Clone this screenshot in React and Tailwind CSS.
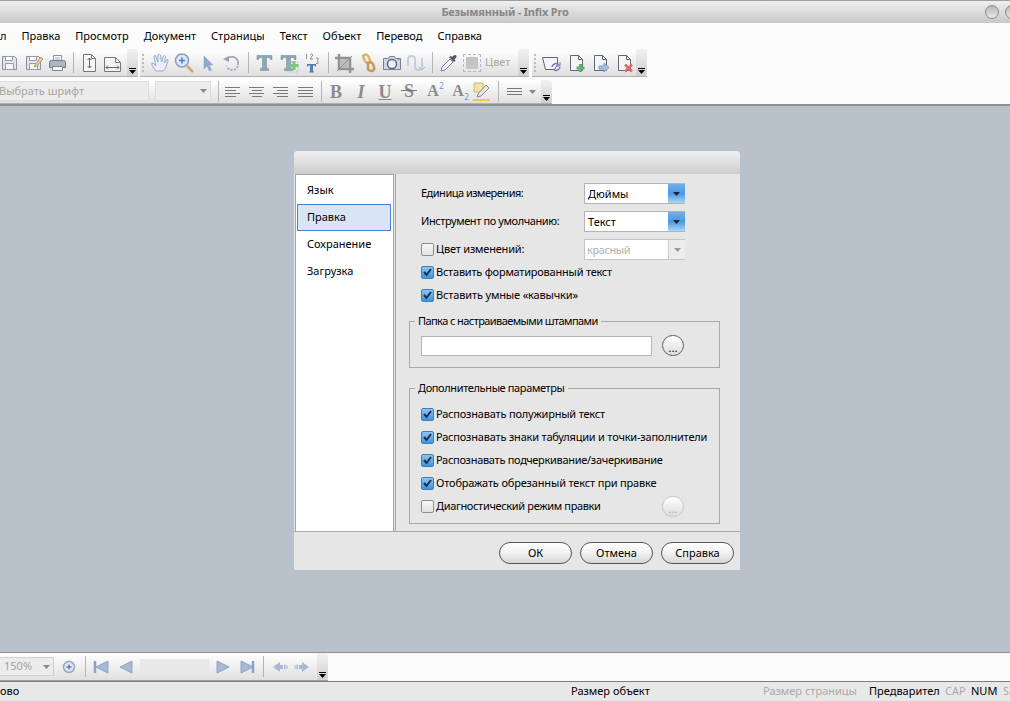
const font = { fontFamily: '"Noto Sans", "Open Sans", sans-serif' };

function Ic({ children, w = 24 }) {
  return (
    <svg width={w} height="24" viewBox={`0 0 ${w} 24`} fill="none" className="block shrink-0">
      {children}
    </svg>
  );
}

function Cell({ w = "w-6", children }) {
  return <div className={`${w} h-full flex items-center justify-center shrink-0`}>{children}</div>;
}

function Sep() {
  return <div className="w-[8px] h-full shrink-0 flex items-center justify-center"><div className="w-px h-[21px] bg-[#b4b4b4]" /></div>;
}

function Grip() {
  return (
    <div className="w-[5px] h-full shrink-0 flex flex-col items-center justify-center gap-[2px]">
      {[0, 1, 2, 3, 4].map((i) => <div key={i} className="w-[2px] h-[2px] bg-[#bdbdbd]" />)}
    </div>
  );
}

function More() {
  return (
    <div className="w-[11px] h-full shrink-0 bg-gradient-to-b from-[#f2f2f2] to-[#cfcfcf] rounded-r-[3px] flex flex-col items-center justify-end pb-[2px]">
      <div className="w-[7px] h-px bg-black mb-[1px]" />
      <svg width="7" height="4" viewBox="0 0 7 4" className="block"><path d="M0 0h7L3.5 4z" fill="#000" /></svg>
    </div>
  );
}

const Save = ({ pen }) => (
  <Ic>
    <path d="M5.5 5.5h12l2 2v11h-14z" fill="#dfe3ec" stroke="#8a8f9c" />
    <path d="M8.5 5.5h7v4h-7z" fill="#fff" stroke="#9a9ea9" />
    <path d="M8.5 12.5h8v6h-8z" fill="#f4f4f4" stroke="#9a9ea9" />
    {pen && <path d="M14 14l6-8 2 2-6 7-3 1z" fill="#e8d49a" stroke="#b39c62" />}
  </Ic>
);
const Print = () => (
  <Ic>
    <path d="M8.5 4.5h8v6h-8z" fill="#fff" stroke="#8c93a0" />
    <path d="M10 7h5M10 9h5" stroke="#7fb0c9" />
    <path d="M4.5 11.5q0-2 2-2h12q2 0 2 2v5h-16z" fill="#aeb6c4" stroke="#727a88" />
    <path d="M7.5 15.5h10v4h-10z" fill="#f4f5f7" stroke="#7d8491" />
  </Ic>
);
const PageV = () => (
  <Ic>
    <path d="M6.5 3.5h8l4 4v13h-12z" fill="#f5f5f5" stroke="#777" />
    <path d="M14.5 3.5v4h4" stroke="#777" />
    <path d="M12.5 7v10M10.5 9l2-2 2 2M10.5 15l2 2 2-2" stroke="#666" />
  </Ic>
);
const PageH = () => (
  <Ic>
    <path d="M3.5 6.500h11l5 5v9h-16z" fill="#f5f5f5" stroke="#777" />
    <path d="M14.500 6.500v5h5" stroke="#777" />
    <path d="M5 16.500h13M7 14.500l-2 2 2 2M16 14.500l2 2-2 2" stroke="#666" />
  </Ic>
);
const Hand = () => (
  <Ic>
    <path d="M8 20q-2-2-4-6-1-2 1-2l3 3-2-9q0-2 1.500-1.500L10 11 10 4q1.500-1.500 2.500 0L13.500 11l2-6q1.500-1 2 .5L16.500 12l2.500-3.500q1.500 0 1 1.500L18 16q-1 3-3 4z" fill="#e9eefa" stroke="#9aa9cc" />
  </Ic>
);
const Zoom = () => (
  <Ic>
    <circle cx="10" cy="9.500" r="6.500" fill="#dbe6f6" stroke="#8d9cbe" strokeWidth="1.500" />
    <path d="M7 9.500h6M10 6.500v6" stroke="#5a78ba" strokeWidth="1.500" />
    <path d="M15 15l6 6" stroke="#c9ab6c" strokeWidth="2.500" />
  </Ic>
);
const Arrow = () => (
  <Ic><path d="M8 5l0 13 3-3 2.500 5 2-1-2.500-5H17z" fill="#8fa9cf" stroke="#86a0c6" strokeWidth="0.5" /></Ic>
);
const Rot = () => (
  <Ic>
    <path d="M7 8q3-3 7-2 5 2 4 8" stroke="#98a0b2" strokeWidth="1.500" />
    <path d="M18 15q-2 4-6 4-4 0-5-4" stroke="#8f9dc8" strokeWidth="1.500" strokeDasharray="2 1.500" />
    <path d="M3 8l6-3v6z" fill="#98a0b2" />
  </Ic>
);
const BigT = ({ plus, nums }) => (
  <Ic>
    <path d={nums ? "M7 13h9v2.500h-1l-.5-1h-1.500v6h1v1h-5v-1h1v-6h-1.500l-.5 1h-1z" : "M5 4.500h15v4h-1.500l-1-2h-3v11h2v2h-8v-2h2v-11h-3l-1 2H5z"} fill={nums ? "#4f7fb4" : "#8ca6b4"} stroke={nums ? "none" : "#6c8594"} strokeWidth="0.5" />
    {plus && <path d="M12 11h10v10H12z" fill="none" stroke="#a8b8d8" strokeDasharray="1.500 1.500" />}
    {plus && <path d="M18 10v9M13.500 14.500h9" stroke="#7cc77c" strokeWidth="3" />}
    {nums && <path d="M6.500 3v5M10 4q2-2 3 0l-3 4h3M16 7h2q1 1.500-1 2.500q2 .5 1 3h-2" stroke="#777" strokeWidth="0.8" />}
  </Ic>
);
const Crop = () => (
  <Ic>
    <path d="M7 3v15h15M3 7h15v15" stroke="#939393" strokeWidth="2.500" />
    <path d="M8 8h9v9H8z" fill="#bcbcbc" />
    <path d="M5 20L20 5" stroke="#939393" />
  </Ic>
);
const Link = () => (
  <Ic>
    <path d="M7 5q3-3 5 0l2 4q1 3-2 3-2 0-3-2z" stroke="#d8b56a" strokeWidth="2.500" />
    <path d="M12 12q3-2 5 1l1 3q1 3-2 4-3 0-4-2z" stroke="#c89c4e" strokeWidth="2.500" />
  </Ic>
);
const Cam = () => (
  <Ic>
    <path d="M3.500 7.500h5l1-2h5l1 2h5v11h-17z" fill="#cdd6e6" stroke="#74809a" />
    <circle cx="12" cy="13" r="4.500" fill="#eef1f6" stroke="#5e6a82" strokeWidth="1.500" />
    <path d="M17 8h3" stroke="#d06060" />
  </Ic>
);
const Curve = () => (
  <Ic>
    <path d="M4 15V9q0-4 3.500-4T11 9v7q0 3 3.500 3T18 16V7" stroke="#c2cee3" strokeWidth="2" />
    <path d="M15 16l3 3 3-3" stroke="#a8b8d4" fill="none" />
  </Ic>
);
const Dropper = () => (
  <Ic>
    <path d="M5 20l1-4 8-8 3 3-8 8z" fill="#eef3fb" stroke="#6f80b8" />
    <path d="M13 6l5 5 1.500-1.500-1-1 2-2.500q.5-2-2-2l-2.500 2-1-1z" fill="#555" />
  </Ic>
);
const Swatch = () => (
  <div className="w-[18px] h-[18px] border border-dashed border-[#a9b9dc] p-[2px]">
    <div className="w-full h-full bg-[#c4c4c4]" />
  </div>
);
const Doc = ({ badge }) => (
  <Ic>
    <path d="M6.500 4.500h8l4 4v11h-12z" fill="#f3f5f8" stroke="#5f6670" />
    <path d="M14.500 4.500v4h4" stroke="#5f6670" />
    {badge === "add" && <path d="M16.500 13v8M12.500 17h8" stroke="#5fb36a" strokeWidth="3" />}
    {badge === "go" && <path d="M11 15h5v-3l5 4.500-5 4.500v-3h-5z" fill="#a7c0e6" stroke="#7f9bc8" />}
    {badge === "del" && <path d="M13 13.500l7 7M20 13.500l-7 7" stroke="#e06a6a" strokeWidth="2.500" />}
  </Ic>
);
const DocRefresh = () => (
  <Ic>
    <path d="M2.500 6.500h15v7l-3 5h-9z" fill="#f3f5f8" stroke="#5f6670" />
    <path d="M12 16a4 4 0 0 1 7-2M20 16a4 4 0 0 1-7 2" stroke="#7b74c4" strokeWidth="1.500" />
    <path d="M20 11v4h-4" stroke="#7b74c4" />
  </Ic>
);
const Align = ({ lines }) => (
  <Ic>
    {lines.map(([x1, x2], i) => <path key={i} d={`M${x1} ${7.5 + i * 3}H${x2}`} stroke="#777" />)}
  </Ic>
);
const Letter = ({ children, cls, small }) => (
  <span className={`${small ? "text-[16px]" : "text-[18px]"} leading-none text-[#8a8a8a] font-bold ${cls || ""}`} style={{ fontFamily: '"Liberation Serif", serif' }}>{children}</span>
);
const Marker = () => (
  <Ic>
    <path d="M4 3h9v9H4z" fill="#f0e4a8" stroke="#c8b878" />
    <path d="M8 14l8-9 3 3-8 8-4 1z" fill="#e8e8e8" stroke="#888" />
    <path d="M3 20h17" stroke="#f0c850" strokeWidth="2" />
  </Ic>
);
const Lines = () => (
  <Ic>
    <path d="M3 8.500h15M3 11.500h15M3 14.500h15" stroke="#777" />
  </Ic>
);

const Caret = ({ c = "#888" }) => (
  <svg width="7" height="4" viewBox="0 0 7 4" className="block"><path d="M0 0h7L3.500 4z" fill={c} /></svg>
);

function NavTri({ dir, bar }) {
  return (
    <Ic>
      {dir === "left" ? <path d="M19 6v12L7 12z" fill="#a7b9d4" stroke="#8ea3c4" /> : <path d="M6 6v12l12-6z" fill="#a7b9d4" stroke="#8ea3c4" />}
      {bar && <path d={dir === "left" ? "M6 6v12" : "M18 6v12"} stroke="#8ea3c4" strokeWidth="2.500" />}
    </Ic>
  );
}

function NavHist({ dir }) {
  return (
    <Ic>
      {dir === "left"
        ? <path d="M5 12l7-5v3h3v4h-3v3zM16 9.500h1.500v5H16zM18.500 10h1v4h-1z" fill="#a7b9d4" />
        : <path d="M19 12l-7-5v3H9v4h3v3zM6.500 9.500H8v5H6.500zM4.500 10h1v4h-1z" fill="#a7b9d4" />}
    </Ic>
  );
}

function Check({ on }) {
  return (
    <div className={`w-[13px] h-[13px] rounded-[2px] border shrink-0 flex items-center justify-center ${on ? "border-[#3f7fb8] bg-gradient-to-b from-[#8cc6f2] to-[#3b95df]" : "border-[#8e8e8e] bg-gradient-to-b from-[#f8f8f8] to-[#e2e2e2]"}`}>
      {on && (
        <svg width="11" height="11" viewBox="0 0 11 11" className="block">
          <path d="M2 5l2.500 3L9 2" stroke="#12324f" strokeWidth="2" fill="none" />
        </svg>
      )}
    </div>
  );
}

function CheckRow({ on, label, cls }) {
  return (
    <div className="h-[23px] flex items-center gap-[2px] ml-[12px]">
      <Check on={on} />
      <span className={`whitespace-nowrap ${cls}`}>{label}</span>
    </div>
  );
}

function Combo({ label, disabled }) {
  return (
    <div className={`w-[101px] h-[21px] flex border bg-white ${disabled ? "border-[#c4c4c4] border-r-0" : "border-[#b4b4b4] border-r-0"}`}>
      <span className={`flex-1 leading-[19px] ${disabled ? "text-[#b0b0b0] tracking-[-0.4px] pl-[2px]" : "pl-[3px]"}`}>{label}</span>
      {disabled ? (
        <div className="w-[17px] bg-[#ececec] border-l border-[#cfcfcf] flex items-center justify-center"><Caret c="#9a9a9a" /></div>
      ) : (
        <div className="w-[17px] bg-gradient-to-b from-[#6fb0ea] via-[#4c97e0] to-[#a9d6f7] flex items-center justify-center"><Caret c="#0d2a45" /></div>
      )}
    </div>
  );
}

function ComboRow({ label, value, disabled, check, cls }) {
  return (
    <div className="h-[21px] flex items-center ml-[12px]">
      <div className="w-[163px] flex items-center gap-[2px] whitespace-nowrap shrink-0">
        {check && <Check />}
        <span className={cls}>{label}</span>
      </div>
      <Combo label={value} disabled={disabled} />
    </div>
  );
}

function RoundBtn({ disabled }) {
  return (
    <div className={`w-[22px] h-[21px] rounded-full border flex items-end justify-center bg-gradient-to-b from-white to-[#dcdcdc] ${disabled ? "border-[#c6c6c6] text-[#b0b0b0]" : "border-[#5e5e5e]"}`}>
      <span className="leading-[15px]">...</span>
    </div>
  );
}

function PillBtn({ children }) {
  return (
    <div className="w-[73px] h-[22px] rounded-full border border-[#565656] bg-gradient-to-b from-white via-[#f1f1f1] to-[#d6d6d6] flex items-center justify-center">
      {children}
    </div>
  );
}

const menu = ["Правка", "Просмотр", "Документ", "Страницы", "Текст", "Объект", "Перевод", "Справка"];
const sideItems = ["Язык", "Правка", "Сохранение", "Загрузка"];

export default function App() {
  return (
    <div className="w-[1010px] h-[701px] overflow-hidden flex flex-col bg-[#b9c2ca] text-[11px] text-black" style={font}>
      {/* title bar */}
      <div className="h-[23px] shrink-0 border-t border-[#a0a0a0] bg-gradient-to-b from-[#f0f0f0] to-[#c8c8c8] relative flex items-center justify-center">
        <span className="font-bold text-[#868686] tracking-[-0.2px]">Безымянный - Infix Pro</span>
        <div className="absolute left-[985px] top-[4px] w-[14px] h-[14px] rounded-full border border-[#8a8a8a] bg-gradient-to-b from-[#b8b8b8] to-[#e8e8e8]" />
        <div className="absolute left-[1005px] top-[4px] w-[14px] h-[14px] rounded-full border border-[#8a8a8a] bg-gradient-to-b from-[#b8b8b8] to-[#e8e8e8]" />
      </div>

      {/* menu */}
      <div className="h-[26px] shrink-0 bg-[#fbfbfb] flex items-center whitespace-nowrap">
        <span className="mr-[15px]">л</span>
        {menu.map((m) => (
          <span key={m} className="mr-[15px]">{m}</span>
        ))}
      </div>

      {/* toolbar row 1 */}
      <div className="h-[28px] shrink-0 bg-[#fbfbfb] flex -ml-[3px]">
        <div className="flex h-full bg-gradient-to-b from-white to-[#dfdfdf] border-b border-[#b0b0b0] shrink-0">
          <Cell><Save /></Cell>
          <Cell><Save pen /></Cell>
          <Cell><Print /></Cell>
          <Sep />
          <Cell><PageV /></Cell>
          <Cell><PageH /></Cell>
          <div className="w-[2px]" />
          <More />
        </div>
        <div className="w-[2px] shrink-0" />
        <div className="flex h-full bg-gradient-to-b from-white to-[#dfdfdf] border-b border-[#b0b0b0] shrink-0">
          <Grip />
          <div className="w-[3px]" />
          <Cell><Hand /></Cell>
          <Cell><Zoom /></Cell>
          <Cell><Arrow /></Cell>
          <Cell><Rot /></Cell>
          <Sep />
          <Cell><BigT /></Cell>
          <Cell><BigT plus /></Cell>
          <Cell><BigT nums /></Cell>
          <Sep />
          <Cell><Crop /></Cell>
          <Cell><Link /></Cell>
          <Cell><Cam /></Cell>
          <Cell><Curve /></Cell>
          <Sep />
          <Cell><Dropper /></Cell>
          <Cell><Swatch /></Cell>
          <div className="w-[34px] h-full flex items-center text-[#a8a8a8] pl-[1px]">Цвет</div>
          <More />
        </div>
        <div className="w-[3px] shrink-0" />
        <div className="flex h-full bg-gradient-to-b from-white to-[#dfdfdf] border-b border-[#b0b0b0] shrink-0">
          <Grip />
          <div className="w-[3px]" />
          <Cell><DocRefresh /></Cell>
          <Cell><Doc badge="add" /></Cell>
          <Cell><Doc badge="go" /></Cell>
          <Cell><Doc badge="del" /></Cell>
          <More />
        </div>
      </div>

      {/* gap */}
      <div className="h-[3px] shrink-0 bg-[#fbfbfb]" />

      {/* toolbar row 2 */}
      <div className="h-[24px] shrink-0 bg-[#fbfbfb]">
        <div className="flex h-full w-fit bg-gradient-to-b from-white to-[#e0e0e0] border-b border-[#b0b0b0]">
          <div className="w-[150px] h-[20px] mt-[1px] bg-[#ececec] border border-[#dcdcdc] -ml-[1px] overflow-hidden whitespace-nowrap text-[#a4a4a4] leading-[18px] shrink-0">
            <span className="-ml-[1px] block">Выбрать шрифт</span>
          </div>
          <div className="w-[56px] h-[20px] mt-[1px] ml-[6px] bg-[#ececec] border border-[#dcdcdc] flex items-center justify-end pr-[3px] shrink-0"><Caret /></div>
          <div className="w-[3px]" />
          <Sep />
          <Cell><Align lines={[[3, 18], [3, 14], [3, 18], [3, 14]]} /></Cell>
          <Cell><Align lines={[[3, 18], [6, 16], [3, 18], [6, 16]]} /></Cell>
          <Cell><Align lines={[[3, 18], [7, 18], [3, 18], [7, 18]]} /></Cell>
          <Cell><Align lines={[[4, 19], [4, 19], [4, 19], [4, 19]]} /></Cell>
          <div className="w-[6px] h-full shrink-0 flex items-center justify-center"><div className="w-px h-[21px] bg-[#b4b4b4]" /></div>
          <Cell><Letter>B</Letter></Cell>
          <div className="w-px" />
          <Cell><Letter cls="italic">I</Letter></Cell>
          <Cell><Letter cls="underline">U</Letter></Cell>
          <Cell>
            <span className="relative">
              <Letter>S</Letter>
              <span className="absolute left-[-3px] right-[-3px] top-[8px] h-px bg-[#777]" />
            </span>
          </Cell>
          <Cell>
            <span className="relative"><Letter small>A</Letter><span className="absolute -top-[1px] -right-[5px] text-[8px] leading-none text-[#6a8fe0]">2</span></span>
          </Cell>
          <div className="w-px" />
          <Cell>
            <span className="relative"><Letter small>A</Letter><span className="absolute -bottom-[1px] -right-[5px] text-[8px] leading-none text-[#6a8fe0]">2</span></span>
          </Cell>
          <Cell><Marker /></Cell>
          <Sep />
          <div className="w-[2px]" />
          <Cell><Lines /></Cell>
          <div className="w-[13px] h-full flex items-center pl-[1px]"><Caret /></div>
          <More />
        </div>
      </div>

      <div className="h-[2px] shrink-0 bg-[#8f8f8f]" />

      {/* canvas */}
      <div className="flex-1 min-h-0 pt-[45px] pl-[294px]">
        <div className="w-[446px] h-[419px] rounded-t-[4px] overflow-hidden bg-[#e6e6e6] flex flex-col">
          <div className="h-[23px] shrink-0 bg-gradient-to-b from-[#f0f0f0] to-[#cdcdcd]" />
          <div className="h-[358px] shrink-0 flex pl-[1px] border-b border-[#a8a8a8]">
            {/* side list */}
            <div className="w-[99px] h-full bg-white border border-[#a4a4a4] border-b-0 pt-[2px] pl-[1px] pr-[2px] shrink-0">
              {sideItems.map((s) => (
                <div key={s} className={`h-[27px] flex items-center pl-[9px] border ${s === "Правка" ? "bg-[#d9e5f5] border-[#3f83d8]" : "border-transparent"}`}>
                  {s}
                </div>
              ))}
            </div>
            {/* panel */}
            <div className="flex-1 border-l border-[#a8a8a8] ml-[1px] pl-[13px] pt-[9px]">
              <ComboRow label="Единица измерения:" value="Дюймы" cls="tracking-[-0.5px]" />
              <div className="h-[7px]" />
              <ComboRow label="Инструмент по умолчанию:" value="Текст" cls="tracking-[-0.4px]" />
              <div className="h-[7px]" />
              <ComboRow label="Цвет изменений:" value="красный" disabled check cls="tracking-[-0.2px]" />
              <div className="h-px" />
              <CheckRow on label="Вставить форматированный текст" cls="tracking-[-0.23px]" />
              <CheckRow on label="Вставить умные «кавычки»" cls="tracking-[-0.15px]" />

              <fieldset className="w-[311px] mt-[7px] border border-[#a8a8a8] pb-[11px]">
                <legend className="ml-[5px] px-[3px] leading-[14px] whitespace-nowrap tracking-[-0.58px]">Папка с настраиваемыми штампами</legend>
                <div className="mt-[7px] ml-[11px] flex items-center gap-[10px]">
                  <div className="w-[231px] h-[20px] bg-white border border-[#b4b4b4]" />
                  <RoundBtn />
                </div>
              </fieldset>

              <fieldset className="w-[311px] mt-[13px] border border-[#a8a8a8] pb-[5px]">
                <legend className="ml-[5px] px-[3px] leading-[14px] whitespace-nowrap tracking-[-0.37px]">Дополнительные параметры</legend>
                <div className="mt-[8px] -ml-[1px]">
                  <CheckRow on label="Распознавать полужирный текст" cls="tracking-[-0.2px]" />
                  <CheckRow on label="Распознавать знаки табуляции и точки-заполнители" cls="tracking-[-0.2px]" />
                  <CheckRow on label="Распознавать подчеркивание/зачеркивание" cls="tracking-[-0.3px]" />
                  <CheckRow on label="Отображать обрезанный текст при правке" cls="tracking-[-0.16px]" />
                  <div className="flex items-center">
                    <CheckRow label="Диагностический режим правки" cls="tracking-[-0.34px]" />
                    <div className="ml-auto mr-[35px]"><RoundBtn disabled /></div>
                  </div>
                </div>
              </fieldset>
            </div>
          </div>
          <div className="flex-1 flex items-start justify-end gap-[8px] pt-[10px] pr-[6px]">
            <PillBtn>ОК</PillBtn>
            <PillBtn>Отмена</PillBtn>
            <PillBtn>Справка</PillBtn>
          </div>
        </div>
      </div>

      {/* bottom toolbar */}
      <div className="h-[29px] shrink-0 bg-[#fbfbfb] border-t border-[#8f8f8f]">
        <div className="flex h-full w-fit bg-gradient-to-b from-white to-[#e0e0e0] border-b border-[#a0a0a0]">
          <div className="w-[55px] h-[19px] mt-[4px] -ml-[1px] bg-[#ececec] border border-[#d0d0d0] flex items-center justify-between pl-[4px] pr-[3px] text-[#a4a4a4] shrink-0">
            <span>150%</span><Caret />
          </div>
          <div className="w-[3px]" />
          <Cell>
            <Ic>
              <circle cx="12" cy="12" r="5.500" fill="#dfe5f2" stroke="#98a6c4" strokeWidth="1.500" />
              <path d="M9.500 12h5M12 9.500v5" stroke="#5f77ad" strokeWidth="1.300" />
            </Ic>
          </Cell>
          <Sep />
          <Cell><NavTri dir="left" bar /></Cell>
          <Cell><NavTri dir="left" /></Cell>
          <div className="w-[69px] h-[15px] mt-[6px] ml-[3px] bg-[#e8e8e8] shrink-0" />
          <div className="w-[2px]" />
          <Cell><NavTri dir="right" /></Cell>
          <Cell><NavTri dir="right" bar /></Cell>
          <Sep />
          <div className="w-[2px]" />
          <Cell w="w-[22px]"><NavHist dir="left" /></Cell>
          <Cell w="w-[22px]"><NavHist dir="right" /></Cell>
          <div className="w-[4px]" />
          <More />
        </div>
      </div>

      {/* status bar */}
      <div className="h-[20px] shrink-0 border-t border-[#7d7d7d] bg-[#e8e8e8] flex items-center whitespace-nowrap">
        <span className="w-[571px] shrink-0">ово</span>
        <span className="w-[192px] shrink-0">Размер объект</span>
        <span className="w-[106px] shrink-0 text-[#a8a8a8]">Размер страницы</span>
        <span className="w-[76px] shrink-0">Предварител</span>
        <span className="w-[26px] shrink-0 text-[#a8a8a8]">CAP</span>
        <span className="w-[32px] shrink-0">NUM</span>
        <span className="text-[#a8a8a8]">S</span>
      </div>
    </div>
  );
}
